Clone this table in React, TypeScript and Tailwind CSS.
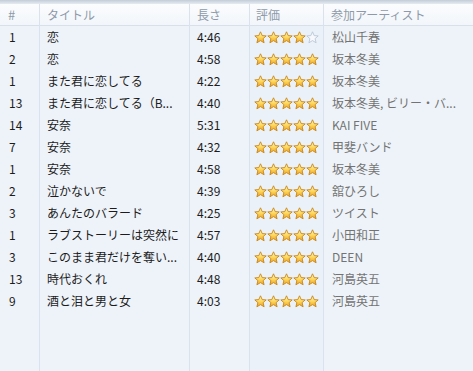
import React from 'react';

const rows = [
  { no: '1', title: '恋', len: '4:46', rate: 4, artist: '松山千春' },
  { no: '2', title: '恋', len: '4:58', rate: 5, artist: '坂本冬美' },
  { no: '1', title: 'また君に恋してる', len: '4:22', rate: 5, artist: '坂本冬美' },
  { no: '13', title: 'また君に恋してる（B...', len: '4:40', rate: 5, artist: '坂本冬美, ビリー・バ...' },
  { no: '14', title: '安奈', len: '5:31', rate: 5, artist: 'KAI FIVE' },
  { no: '7', title: '安奈', len: '4:32', rate: 5, artist: '甲斐バンド' },
  { no: '1', title: '安奈', len: '4:58', rate: 5, artist: '坂本冬美' },
  { no: '2', title: '泣かないで', len: '4:39', rate: 5, artist: '舘ひろし' },
  { no: '3', title: 'あんたのバラード', len: '4:25', rate: 5, artist: 'ツイスト' },
  { no: '1', title: 'ラブストーリーは突然に', len: '4:57', rate: 5, artist: '小田和正' },
  { no: '3', title: 'このまま君だけを奪い...', len: '4:40', rate: 5, artist: 'DEEN' },
  { no: '13', title: '時代おくれ', len: '4:48', rate: 5, artist: '河島英五' },
  { no: '9', title: '酒と泪と男と女', len: '4:03', rate: 5, artist: '河島英五' },
];

const Star = ({ on }: { on: boolean }) => (
  <svg width="13" height="13" viewBox="0 0 13 13">
    <defs>
      <linearGradient id="sg" x1="0" y1="0" x2="0" y2="1">
        <stop offset="0" stopColor="#fffbd6" />
        <stop offset="0.5" stopColor="#fdd75c" />
        <stop offset="1" stopColor="#f0a01a" />
      </linearGradient>
    </defs>
    <path
      d="M6.5 0.8 L8.2 4.6 L12.2 4.9 L9.1 7.6 L10.1 11.8 L6.5 9.6 L2.9 11.8 L3.9 7.6 L0.8 4.9 L4.8 4.6 Z"
      fill={on ? 'url(#sg)' : '#f6f8fb'}
      stroke={on ? '#c68515' : '#b9c6d6'}
      strokeWidth="0.9"
      strokeLinejoin="round"
    />
  </svg>
);

const cols = 'grid grid-cols-[40px_150px_60px_74px_1fr]';
const sep = 'border-r border-[#d9e2ed]';

export default function App() {
  return (
    <div
      className="w-[473px] h-[371px] overflow-hidden bg-[#eef3f9] text-[12px] flex flex-col"
      style={{ fontFamily: '"Noto Sans CJK JP", "Noto Sans", sans-serif' }}
    >
      <div className="h-[4px] bg-gradient-to-b from-[#c3ccd7] to-[#e6ebf1]" />
      <div className={`${cols} h-[22px] bg-gradient-to-b from-[#fbfcfe] to-[#f2f6fa] border-b border-[#d8e0ea] text-[#8e9aa9]`}>
        <div className={`${sep} pl-[8px] leading-[22px] text-[13px]`}>#</div>
        <div className={`${sep} pl-[7px] leading-[22px]`}>タイトル</div>
        <div className={`${sep} pl-[7px] leading-[22px]`}>長さ</div>
        <div className={`${sep} pl-[6px] leading-[22px]`}>評価</div>
        <div className="pl-[7px] leading-[22px]">参加アーティスト</div>
      </div>
      <div className={`${cols} flex-1`}>
        <div className={sep}>
          {rows.map((r, i) => (
            <div key={i} className="h-[22px] leading-[22px] pl-[9px] text-[#1c1c1c]">{r.no}</div>
          ))}
        </div>
        <div className={sep}>
          {rows.map((r, i) => (
            <div key={i} className="h-[22px] leading-[22px] pl-[7px] text-[#1c1c1c] whitespace-nowrap overflow-hidden">{r.title}</div>
          ))}
        </div>
        <div className={sep}>
          {rows.map((r, i) => (
            <div key={i} className="h-[22px] leading-[22px] pl-[7px] text-[#1c1c1c]">{r.len}</div>
          ))}
        </div>
        <div className={`${sep} bg-[#ebf1f8]`}>
          {rows.map((r, i) => (
            <div key={i} className="h-[22px] flex items-center pl-[4px]">
              {[0, 1, 2, 3, 4].map((k) => (
                <Star key={k} on={k < r.rate} />
              ))}
            </div>
          ))}
        </div>
        <div>
          {rows.map((r, i) => (
            <div key={i} className="h-[22px] leading-[22px] pl-[8px] text-[#737373] whitespace-nowrap overflow-hidden">{r.artist}</div>
          ))}
        </div>
      </div>
    </div>
  );
}
